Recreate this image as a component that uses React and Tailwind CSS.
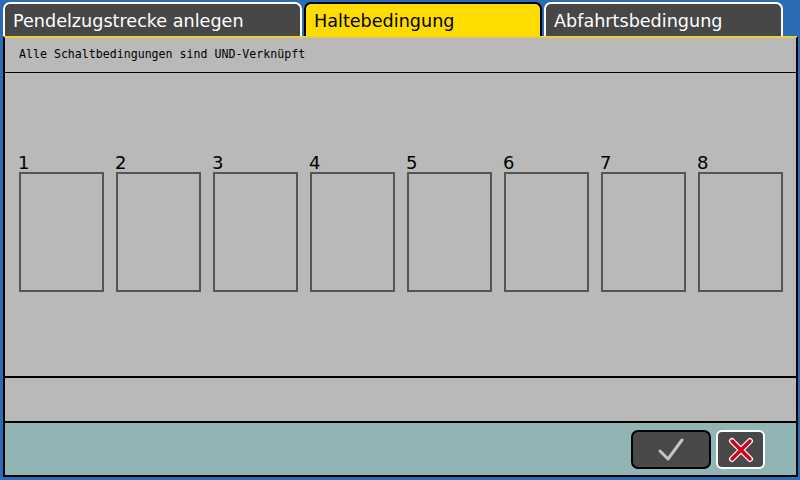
export default function App() {
  const slots = [1, 2, 3, 4, 5, 6, 7, 8];

  return (
    <div className="w-[800px] h-[480px] bg-[#2b6db5] flex flex-col pt-[2px] pl-[3px] pr-[2px] pb-[3px] font-['DejaVu_Sans',sans-serif]">
      {/* tabs */}
      <div className="flex items-end h-[34px] gap-[2px]">
        <div className="w-[299px] h-full bg-[#474747] border-2 border-b-0 border-white rounded-t-[7px] text-white text-[17.6px] leading-none pl-[8px] pt-[9px]">
          Pendelzugstrecke anlegen
        </div>
        <div className="w-[238px] h-full bg-[#ffdc00] border-2 border-b-0 border-black rounded-t-[7px] text-black text-[17.6px] leading-none pl-[8px] pt-[9px]">
          Haltebedingung
        </div>
        <div className="w-[239px] h-full bg-[#474747] border-2 border-b-0 border-white rounded-t-[7px] text-white text-[17.6px] leading-none pl-[8px] pt-[9px]">
          Abfahrtsbedingung
        </div>
      </div>

      {/* panel */}
      <div className="flex-1 flex flex-col bg-[#b9b9b9] border-x-2 border-b-2 border-black border-t-2 border-t-[#e8cf3a]">
        <div className="h-[35px] border-b border-black flex items-center pl-[14px] text-[11.6px] text-black font-['DejaVu_Sans_Mono',monospace]">
          Alle Schaltbedingungen sind UND-Verknüpft
        </div>

        <div className="flex-1 pt-[81px] pl-[14px] flex gap-[12px]">
          {slots.map((n) => (
            <div key={n} className="flex flex-col">
              <div className="h-[18px] text-[18px] leading-[18px] text-black -ml-[1px]">{n}</div>
              <div className="w-[85px] h-[120px] border-2 border-[#555555]"></div>
            </div>
          ))}
        </div>

        <div className="h-[45px] border-t-2 border-black"></div>

        <div className="h-[54px] bg-[#91b5b4] border-t-2 border-black flex justify-end items-start pt-[7px] pr-[31px] gap-[5px]">
          <div className="w-[80px] h-[39px] bg-[#494949] border-2 border-black rounded-[7px] flex items-center justify-center">
            <svg width="28" height="26" viewBox="0 0 28 26">
              <path d="M3 14 L11 22 L25 3" fill="none" stroke="#c4c4c4" strokeWidth="3" strokeLinecap="round" strokeLinejoin="round" />
            </svg>
          </div>
          <div className="w-[49px] h-[39px] bg-[#494949] border-2 border-white rounded-[6px] flex items-center justify-center">
            <svg width="26" height="26" viewBox="0 0 26 26">
              <path d="M4 4 L22 22 M22 4 L4 22" stroke="#ffffff" strokeWidth="6" strokeLinecap="round" />
              <path d="M4 4 L22 22 M22 4 L4 22" stroke="#d4001a" strokeWidth="3.5" strokeLinecap="round" />
            </svg>
          </div>
        </div>
      </div>
    </div>
  );
}
